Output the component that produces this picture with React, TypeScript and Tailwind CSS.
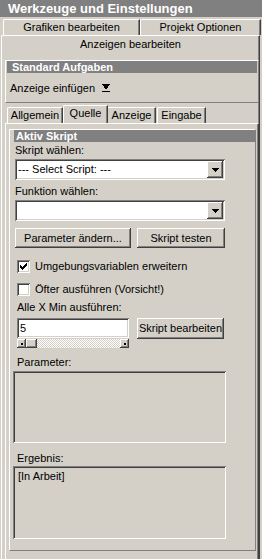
import React from "react";

const raised =
  "shadow-[inset_-1px_-1px_0_#404040,inset_1px_1px_0_#ffffff,inset_-2px_-2px_0_#808080,inset_2px_2px_0_#d4d0c8]";
const sunken =
  "shadow-[inset_1px_1px_0_#808080,inset_-1px_-1px_0_#ffffff,inset_2px_2px_0_#404040,inset_-2px_-2px_0_#d4d0c8]";

function Arrow() {
  return (
    <svg width="7" height="4" viewBox="0 0 7 4">
      <path d="M0 0h7L3.5 4z" fill="#000" shapeRendering="crispEdges" />
    </svg>
  );
}

function Select({ text }: { text?: string }) {
  return (
    <div
      className={`ml-[5px] w-[210px] h-[21px] bg-white flex items-center ${sunken}`}
    >
      <div className="flex-1 pl-[3px] leading-[13px] whitespace-nowrap">{text}</div>
      <div
        className={`w-[16px] h-[17px] mr-[2px] bg-[#d4d0c8] flex items-center justify-center ${raised}`}
      >
        <Arrow />
      </div>
    </div>
  );
}

function Check({ checked, label }: { checked?: boolean; label: string }) {
  return (
    <div className="ml-[7px] flex items-center h-[13px]">
      <div className={`w-[13px] h-[13px] bg-white flex items-center justify-center ${sunken}`}>
        {checked && (
          <svg width="7" height="7" viewBox="0 0 7 7">
            <path
              d="M0 2h1v1h1v1h1V3h1V2h1V1h1V0h1v3H6v1H5v1H4v1H3v1H2V6H1V5H0z"
              fill="#000"
              shapeRendering="crispEdges"
            />
          </svg>
        )}
      </div>
      <span className="ml-[5px] leading-[13px] whitespace-nowrap">{label}</span>
    </div>
  );
}

function Btn({ label, w, h = 20, cls = "" }: { label: string; w: string; h?: number; cls?: string }) {
  return (
    <div
      className={`${w} ${h === 20 ? "h-[20px]" : "h-[21px]"} bg-[#d4d0c8] flex items-center justify-center whitespace-nowrap ${raised} ${cls}`}
    >
      {label}
    </div>
  );
}

function ScrollBtn() {
  return (
    <div className={`w-[9px] h-[9px] bg-[#d4d0c8] flex items-center justify-center ${raised}`}>
      <div className="w-[2px] h-[2px] bg-black" />
    </div>
  );
}

export default function App() {
  return (
    <div
      className="w-[262px] h-[559px] overflow-hidden bg-[#d4d0c8] text-[11px] text-black"
      style={{ fontFamily: '"Liberation Sans", Arial, sans-serif' }}
    >
      {/* Title */}
      <div className="h-[17px] bg-[#808080] text-white font-bold text-[13px] leading-[17px] pl-[8px] whitespace-nowrap">
        Werkzeuge und Einstellungen
      </div>

      {/* Tab row 1 */}
      <div className="h-[18px] pt-[2px] pl-[3px] flex">
        <div className="w-[137px] h-[16px] border-t border-l border-r border-t-white border-l-white border-r-[#404040] shadow-[inset_-1px_0_0_#808080] rounded-tl-[2px] flex items-center justify-center leading-[13px]">
          Grafiken bearbeiten
        </div>
        <div className="w-[121px] h-[16px] border-t border-l border-r border-t-white border-l-white border-r-[#404040] shadow-[inset_-1px_0_0_#808080] rounded-tl-[2px] flex items-center justify-center leading-[13px]">
          Projekt Optionen
        </div>
      </div>

      {/* Tab row 2 (selected) */}
      <div className="ml-[1px] w-[259px] h-[17px] border-t border-l border-r border-t-white border-l-white border-r-[#404040] shadow-[inset_-1px_0_0_#808080] rounded-tl-[2px] flex items-center justify-center leading-[13px]">
        Anzeigen bearbeiten
      </div>

      {/* Outer panel */}
      <div className="ml-[1px] w-[259px] h-[520px] border-l border-r border-l-white border-r-[#404040] shadow-[inset_-1px_0_0_#808080] pl-[3px] pt-[8px] flex flex-col">
        {/* Standard Aufgaben */}
        <div className="w-[254px] h-[43px] border border-t-white border-l-white border-r-[#808080] border-b-[#808080] px-[1px] flex flex-col">
          <div className="h-[12px] bg-[#808080] text-white font-bold leading-[12px] pl-[5px] whitespace-nowrap">
            Standard Aufgaben
          </div>
          <div className="mt-[9px] pl-[3px] flex items-center h-[13px]">
            <span className="leading-[13px]">Anzeige einfügen</span>
            <svg className="ml-[7px]" width="8" height="9" viewBox="0 0 8 9">
              <path d="M0 0h8L4 6z" fill="#000" shapeRendering="crispEdges" />
              <rect x="0" y="7" width="8" height="1" fill="#000" />
            </svg>
          </div>
        </div>

        {/* Inner tabs */}
        <div className="mt-[2px] h-[18px] flex items-end">
          <div className="ml-[2px] w-[56px] h-[16px] border-t border-l border-r border-t-white border-l-white border-r-[#404040] shadow-[inset_-1px_0_0_#808080] rounded-tl-[2px] flex items-center justify-center leading-[13px]">
            Allgemein
          </div>
          <div className="w-[45px] h-[18px] border-t border-l border-r border-t-white border-l-white border-r-[#404040] shadow-[inset_-1px_0_0_#808080] rounded-tl-[2px] flex items-start pt-[1px] justify-center leading-[13px]">
            Quelle
          </div>
          <div className="w-[48px] h-[16px] border-t border-r border-t-white border-r-[#404040] shadow-[inset_-1px_0_0_#808080] flex items-center justify-center leading-[13px]">
            Anzeige
          </div>
          <div className="ml-[1px] w-[49px] h-[16px] border-t border-l border-r border-t-white border-l-white border-r-[#404040] shadow-[inset_-1px_0_0_#808080] rounded-tl-[2px] flex items-center justify-center leading-[13px]">
            Eingabe
          </div>
        </div>

        {/* Inner panel */}
        <div className="w-[254px] flex-1 border-t border-l border-r border-t-white border-l-white border-r-[#404040] shadow-[inset_-1px_0_0_#808080] pl-[3px] pt-[5px]">
          <div className="w-[247px] border-t border-l border-r border-b border-t-white border-l-white border-r-[#808080] border-b-[#808080] flex flex-col pb-[11px]">
            <div className="ml-[4px] h-[12px] bg-[#808080] text-white font-bold leading-[12px] pl-[2px] whitespace-nowrap">
              Aktiv Skript
            </div>
            <div className="mt-[2px] ml-[5px] leading-[13px] h-[13px]">Skript wählen:</div>
            <div className="mt-[2px]">
              <Select text="--- Select Script: ---" />
            </div>
            <div className="mt-[5px] ml-[5px] leading-[13px] h-[13px]">Funktion wählen:</div>
            <div className="mt-[2px]">
              <Select />
            </div>
            <div className="mt-[7px] ml-[5px] flex gap-[6px]">
              <Btn label="Parameter ändern..." w="w-[116px]" />
              <Btn label="Skript testen" w="w-[88px]" />
            </div>
            <div className="mt-[12px]">
              <Check checked label="Umgebungsvariablen erweitern" />
            </div>
            <div className="mt-[10px]">
              <Check label="Öfter ausführen (Vorsicht!)" />
            </div>
            <div className="mt-[5px] ml-[7px] leading-[13px] h-[13px]">Alle X Min ausführen:</div>
            <div className="mt-[4px] ml-[7px] flex items-start">
              <div className="flex flex-col">
                <div className={`w-[112px] h-[20px] bg-white flex items-center pl-[3px] leading-[13px] ${sunken}`}>
                  5
                </div>
                <div className="w-[112px] h-[9px] mt-[1px] flex bg-[image:repeating-conic-gradient(#ffffff_0%_25%,#d4d0c8_0%_50%)] bg-[length:2px_2px]">
                  <ScrollBtn />
                  <div className={`w-[11px] h-[9px] bg-[#d4d0c8] ${raised}`} />
                  <div className="flex-1" />
                  <ScrollBtn />
                </div>
              </div>
              <Btn label="Skript bearbeiten" w="w-[87px]" h={21} cls="ml-[8px]" />
            </div>
            <div className="mt-[8px] ml-[7px] leading-[13px] h-[13px]">Parameter:</div>
            <div className={`mt-[2px] ml-[3px] w-[213px] h-[72px] ${sunken}`} />
            <div className="mt-[9px] ml-[7px] leading-[13px] h-[13px]">Ergebnis:</div>
            <div className={`mt-[1px] ml-[3px] w-[213px] h-[73px] pl-[5px] pt-[4px] leading-[13px] ${sunken}`}>
              [In Arbeit]
            </div>
          </div>
        </div>
      </div>
    </div>
  );
}
